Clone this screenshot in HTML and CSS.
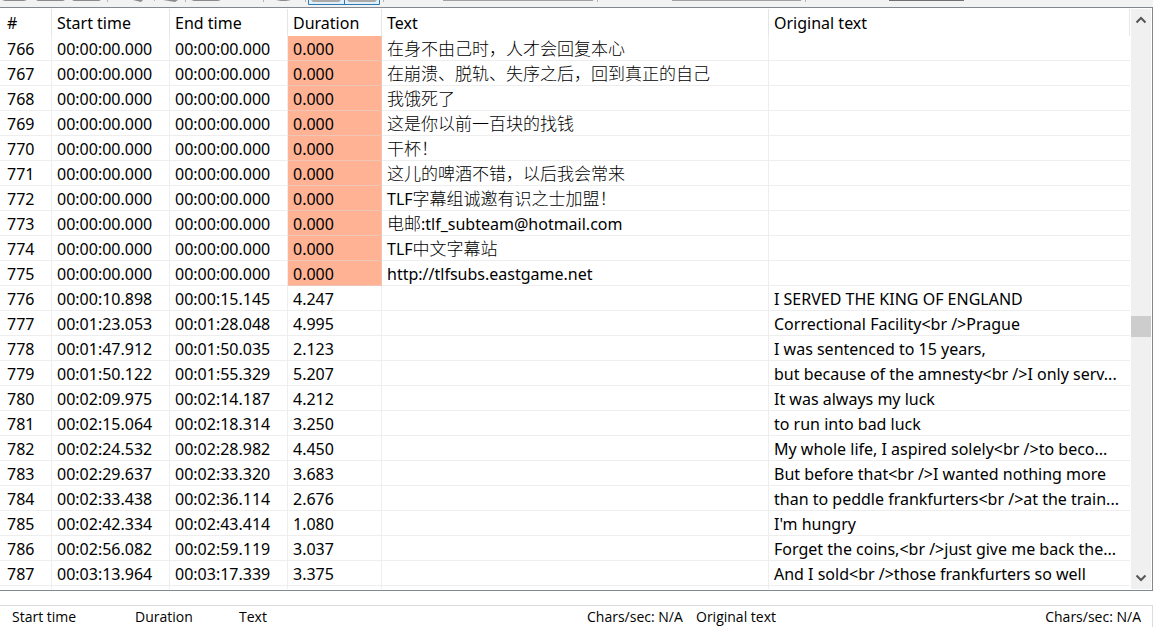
FILE: index.html
```
<!DOCTYPE html>
<html lang="en">
<head>
<meta charset="utf-8">
<title>Subtitle list</title>
<link rel="stylesheet" href="styles.css">
</head>
<body>
<div class="window">
  <div class="toolbar">
    <svg class="toolbar-art" width="980" height="7" viewBox="0 0 980 7" aria-hidden="true">
      <g fill="#8b8b8b"><path d="M2 0h25l-3 1H5zM36 0h29l-2 1H38zM72 0h29l-2 1H74zM191 0h30l-3 1H194z"/><path d="M133 0h10l-2 2zM163 0h15l-3 2zM276 0h15l-5 1h-5z"/></g>
      <path d="M107.500 0v2M154.500 0v1M185.500 0v2M263.500 0v2M305.500 0v2M383.500 0v2M597.500 0v2M805.500 0v2" stroke="#b4b4b4"/>
      <path d="M308.500 0v4.500h71V0M344.500 0v4.500" fill="#e3eef7" stroke="#2a7ab8"/>
      <path d="M311 0h30l-2 2h-26zM347 0h30l-2 2h-26z" fill="#aaa"/>
      <path d="M443 .5h150M672 .5h129" stroke="#a0a0a0"/><path d="M889 .5h75" stroke="#707070"/>
    </svg>
  </div>
  <main class="list">
    <div class="list-body">
      <table class="grid">
        <colgroup><col class="c-num"><col class="c-time"><col class="c-time"><col class="c-dur"><col class="c-text"><col class="c-orig"></colgroup>
        <thead><tr><th>#</th><th>Start time</th><th>End time</th><th>Duration</th><th>Text</th><th>Original text</th></tr></thead>
        <tbody>
          <tr><td>766</td><td>00:00:00.000</td><td>00:00:00.000</td><td class="warn">0.000</td><td><span class="zh" lang="zh">在身不由己时，人才会回复本心</span></td><td></td></tr>
          <tr><td>767</td><td>00:00:00.000</td><td>00:00:00.000</td><td class="warn">0.000</td><td><span class="zh" lang="zh">在崩溃、脱轨、失序之后，回到真正的自己</span></td><td></td></tr>
          <tr><td>768</td><td>00:00:00.000</td><td>00:00:00.000</td><td class="warn">0.000</td><td><span class="zh" lang="zh">我饿死了</span></td><td></td></tr>
          <tr><td>769</td><td>00:00:00.000</td><td>00:00:00.000</td><td class="warn">0.000</td><td><span class="zh" lang="zh">这是你以前一百块的找钱</span></td><td></td></tr>
          <tr><td>770</td><td>00:00:00.000</td><td>00:00:00.000</td><td class="warn">0.000</td><td><span class="zh" lang="zh">干杯！</span></td><td></td></tr>
          <tr><td>771</td><td>00:00:00.000</td><td>00:00:00.000</td><td class="warn">0.000</td><td><span class="zh" lang="zh">这儿的啤酒不错，以后我会常来</span></td><td></td></tr>
          <tr><td>772</td><td>00:00:00.000</td><td>00:00:00.000</td><td class="warn">0.000</td><td>TLF<span class="zh" lang="zh">字幕组诚邀有识之士加盟！</span></td><td></td></tr>
          <tr><td>773</td><td>00:00:00.000</td><td>00:00:00.000</td><td class="warn">0.000</td><td><span class="zh" lang="zh">电邮</span>:tlf_subteam@hotmail.com</td><td></td></tr>
          <tr><td>774</td><td>00:00:00.000</td><td>00:00:00.000</td><td class="warn">0.000</td><td>TLF<span class="zh" lang="zh">中文字幕站</span></td><td></td></tr>
          <tr><td>775</td><td>00:00:00.000</td><td>00:00:00.000</td><td class="warn">0.000</td><td>http://tlfsubs.eastgame.net</td><td></td></tr>
          <tr><td>776</td><td>00:00:10.898</td><td>00:00:15.145</td><td>4.247</td><td></td><td>I SERVED THE KING OF ENGLAND</td></tr>
          <tr><td>777</td><td>00:01:23.053</td><td>00:01:28.048</td><td>4.995</td><td></td><td>Correctional Facility&lt;br /&gt;Prague</td></tr>
          <tr><td>778</td><td>00:01:47.912</td><td>00:01:50.035</td><td>2.123</td><td></td><td>I was sentenced to 15 years,</td></tr>
          <tr><td>779</td><td>00:01:50.122</td><td>00:01:55.329</td><td>5.207</td><td></td><td>but because of the amnesty&lt;br /&gt;I only serv...</td></tr>
          <tr><td>780</td><td>00:02:09.975</td><td>00:02:14.187</td><td>4.212</td><td></td><td>It was always my luck</td></tr>
          <tr><td>781</td><td>00:02:15.064</td><td>00:02:18.314</td><td>3.250</td><td></td><td>to run into bad luck</td></tr>
          <tr><td>782</td><td>00:02:24.532</td><td>00:02:28.982</td><td>4.450</td><td></td><td>My whole life, I aspired solely&lt;br /&gt;to beco...</td></tr>
          <tr><td>783</td><td>00:02:29.637</td><td>00:02:33.320</td><td>3.683</td><td></td><td>But before that&lt;br /&gt;I wanted nothing more</td></tr>
          <tr><td>784</td><td>00:02:33.438</td><td>00:02:36.114</td><td>2.676</td><td></td><td>than to peddle frankfurters&lt;br /&gt;at the train...</td></tr>
          <tr><td>785</td><td>00:02:42.334</td><td>00:02:43.414</td><td>1.080</td><td></td><td>I'm hungry</td></tr>
          <tr><td>786</td><td>00:02:56.082</td><td>00:02:59.119</td><td>3.037</td><td></td><td>Forget the coins,&lt;br /&gt;just give me back the...</td></tr>
          <tr><td>787</td><td>00:03:13.964</td><td>00:03:17.339</td><td>3.375</td><td></td><td>And I sold&lt;br /&gt;those frankfurters so well</td></tr>
        </tbody>
        <tfoot><tr><td></td><td></td><td></td><td></td><td></td><td></td></tr></tfoot>
      </table>
    </div>
    <div class="scrollbar">
      <button class="arrow" type="button" aria-label="Scroll up"><svg width="12" height="8" viewBox="0 0 12 8"><path d="M1.500 6.500 6 2l4.500 4.500" fill="none" stroke="#555" stroke-width="2"/></svg></button>
      <div class="track"><div class="space-above"></div><div class="thumb"></div><div class="space-below"></div></div>
      <button class="arrow" type="button" aria-label="Scroll down"><svg width="12" height="8" viewBox="0 0 12 8"><path d="M1.500 1.500 6 6l4.500-4.500" fill="none" stroke="#555" stroke-width="2"/></svg></button>
    </div>
  </main>
  <footer class="editor">
    <span class="f-start">Start time</span><span class="f-dur">Duration</span><span class="f-text">Text</span><span class="f-cps">Chars/sec: N/A</span><span class="f-orig">Original text</span><span>Chars/sec: N/A</span>
  </footer>
</div>
</body>
</html>
```
FILE: styles.css
```
* { box-sizing: border-box; }
body { margin: 0; background: #fff; color: #000; font: 16px/22px "Noto Sans", "Noto Sans CJK SC", sans-serif; }
.window { min-height: 100vh; display: flex; flex-direction: column; }
.toolbar { height: 7px; background: #f2f2f2; overflow: hidden; }
.toolbar-art { display: block; }
.list { display: flex; border: solid #828790; border-width: 1px 1px 1px 0; padding: 1px 1px 1px 0; }
.list-body { flex: 1; min-width: 0; border-right: 1px solid #fff; }
.grid { width: 100%; table-layout: fixed; border-collapse: separate; border-spacing: 0; }
.c-num { width: 52px; }
.c-time { width: 118px; }
.c-dur { width: 94px; }
.c-text { width: 387px; }
.grid th, .grid td { height: 25px; padding: 2px 0 0 5px; text-align: left; font-weight: 400; white-space: nowrap; border: solid #eee; border-width: 0 1px 1px 0; }
.grid th:first-child, .grid td:first-child { padding-left: 7px; }
.grid th { height: 27px; padding-top: 0; border-color: #e5e5e5; border-bottom: 0; }
.grid td:last-child { border-right: 0; }
.grid .warn { background: #ffb294; border-color: #efc5b5; }
.grid tfoot td { height: 3px; padding: 0; border-bottom: 0; }
.zh { font: 300 17px/20px "Noto Sans CJK SC", sans-serif; }
.scrollbar { width: 20px; display: flex; flex-direction: column; background: #f0f0f0; }
.arrow { height: 22px; padding: 0; border: 0; background: transparent; display: flex; align-items: center; justify-content: center; }
.track { flex: 1; display: flex; flex-direction: column; }
.space-above { flex: 285; }
.space-below { flex: 230; }
.thumb { height: 21px; background: #cdcdcd; }
.editor { margin-top: 14px; flex: 1; display: flex; align-items: flex-start; border: solid #dcdcdc; border-width: 1px 1px 0 0; padding: 0 11px 0 12px; font: 14px/21px "Open Sans", "Noto Sans", sans-serif; white-space: nowrap; }
.f-start { width: 123px; }
.f-dur { width: 104px; }
.f-text { width: 348px; }
.f-cps { width: 109px; }
.f-orig { flex: 1; }
```
